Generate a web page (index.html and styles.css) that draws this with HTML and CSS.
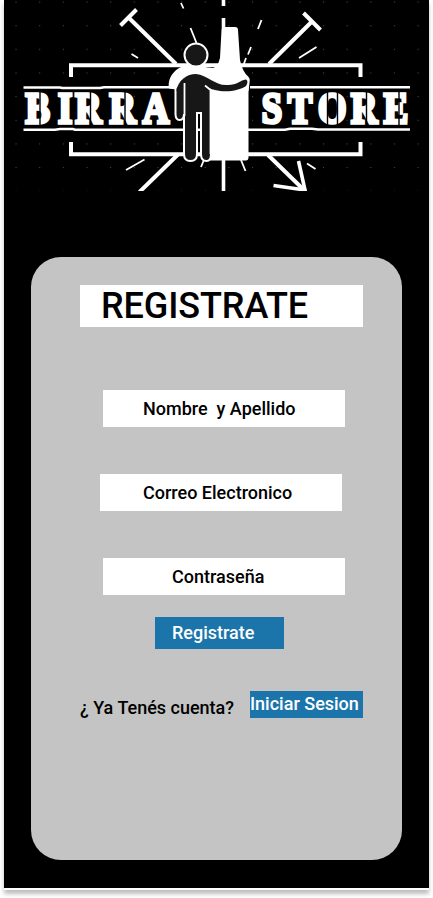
FILE: index.html
```html
<!DOCTYPE html>
<html lang="es">
<head>
<meta charset="utf-8">
<title>Birra Store</title>
<link rel="stylesheet" href="styles.css">
</head>
<body>
<div class="screen">
  <div class="page">
    <header class="hero">
      <svg class="logo" viewBox="4 0 425 191" role="img" aria-label="Birra Store">
        <defs>
          <pattern id="dots" x="15.5" y="1.5" width="23.65" height="23.65" patternUnits="userSpaceOnUse">
            <rect width="1.1" height="1.1" fill="#484848"/>
          </pattern>
        </defs>
        <rect x="4" width="425" height="191" fill="#000"/>
        <rect x="4" width="425" height="191" fill="url(#dots)"/>
        <g fill="none" stroke="#fff" stroke-width="4">
          <path d="M71 77V65.300H360.500V77M71 142V154.300H360.500V142"/>
          <path d="M128.500 17.500L176 64M120.500 25.500L136.500 9.500M311.500 22L269 64M303.500 13L320.500 30M178.500 154L139.500 192M268 155L305 191"/>
          <path d="M298.500 161L305 190L273.500 185.500" stroke-width="3.600"/>
          <path d="M223.500 0V6M223.500 18V30M223.500 158V191" stroke-width="3.600"/>
        </g>
        <g stroke="#fff" stroke-width="1.800">
          <path d="M181 3L183.500 8.500M190.500 28L196.500 43M131.500 54L138 58M126 170L144.500 159.500M203.500 161L201 167M261.500 20L258 29M251 47L248 54.500M246 58L243.500 65M299 58L316.500 47M241 160L245.500 171M307 163.500L315.500 169"/>
        </g>
        <path d="M23.500 87.500H60L62 88H100L104 87.300H410M23.500 129.700H55L60 129H73L75 129.700H285L290 128.700H312L318 129.500H410" fill="none" stroke="#fff" stroke-width="2.600"/>
        <g class="wordmark">
          <text transform="translate(0 123.300) scale(.84 1)" x="30.500 69 89.500 130.500 170">BIRRA</text>
          <text transform="translate(0 123.300) scale(.84 1)" x="311.500 342.500 378.500 418 457">STORE</text>
        </g>
        <path d="M40 91V126.500M90.500 91V126.500M125 91V126.500M327.500 91V126.500M337.500 91V126.500M366.500 91V126.500M399 91V126.500" stroke="#000" stroke-width="1.400"/>
        <path d="M174 84H250V120H174Z" fill="#000"/>
        <path d="M208 158V71Q218 68 220 58L221.500 30Q222 27 225 27H235Q238 27 238 30L240 60Q242 71 248.500 77V158Q248 160.500 246 160.500H208Z" fill="#fff"/>
        <path d="M169 88.500C167 77 176 67 187 65C200 62 211 73 221 65L240 64Q242 72 246 76Q251 77 249.500 83L248.500 91H211L185 84Q179 81 176 89.500Z" fill="#fff"/>
        <g fill="#171717" stroke="#fff" stroke-width="2">
          <path d="M175.500 88V114Q175.500 120 179.500 120Q184 120 184 114V154Q184 161 190.500 161Q197 161 197 154V113H201V154Q201 161 206.500 161Q211 161 211 154V80H182Z"/>
          <circle cx="196" cy="55" r="11.500"/>
        </g>
        <path d="M176.500 91C178 80 187 74 196 74C208 75 215 86 228 85C237 85 241 80 245.500 79.500C248 80 248 83 246 86C240 90 231 92 220 91C214 90 211 89 207 87L200 93H185Z" fill="#171717"/>
        <path d="M184.500 83V116M205 85.500L210.500 90V154" fill="none" stroke="#fff" stroke-width="1.800"/>
      </svg>
    </header>

    <main class="card">
      <h1 class="title">REGISTRATE</h1>
      <form class="form">
        <div class="field">Nombre&nbsp; y Apellido</div>
        <div class="field field-email">Correo Electronico</div>
        <div class="field field-password">Contraseña</div>
        <button class="submit" type="button">Registrate</button>
      </form>
      <div class="login">
        <span class="question">¿ Ya Tenés cuenta?</span>
        <a class="login-link">Iniciar Sesion</a>
      </div>
    </main>
  </div>
</div>
</body>
</html>
```
FILE: styles.css
```css
* {
  box-sizing: border-box;
}

body {
  margin: 0;
  height: 898px;
  overflow: hidden;
  background: #fff;
  color: #000;
  font: 500 18px/21px Roboto, sans-serif;
}

.screen {
  width: 425px;
  height: 890px;
  margin: 0 4px;
  background: #fff;
  box-shadow: 0 4px 4px rgba(0, 0, 0, 0.25);
}

.page {
  height: 888px;
  background: #000;
}

.hero {
  height: 257px;
}

.logo {
  display: block;
  width: 425px;
  height: 191px;
}

.wordmark {
  fill: #fff;
  stroke: #fff;
  stroke-width: 3.6px;
  font: bold 43.5px "Liberation Serif", serif;
}

.card {
  width: 371px;
  height: 603px;
  margin-left: 27px;
  padding: 28px 39px 0 49px;
  border-radius: 30px;
  background: #c4c4c4;
}

.title {
  width: 283px;
  height: 42px;
  margin: 0;
  padding-left: 21px;
  background: #fff;
  font-size: 36px;
  font-weight: 500;
  line-height: 42px;
  letter-spacing: -0.1px;
}

.form {
  display: flex;
  flex-direction: column;
  align-items: flex-start;
  gap: 47px;
  padding: 63px 0 0 20px;
}

.field {
  width: 242px;
  height: 37px;
  margin-left: 3px;
  padding: 8px 0 0 40px;
  background: #fff;
}

.field-email {
  margin-left: 0;
  padding-left: 43px;
}

.field-password {
  padding-left: 69px;
}

.submit {
  width: 129px;
  height: 32px;
  margin: -25px 0 0 55px;
  padding: 0 0 1px 17px;
  border: 0;
  background: #1c75aa;
  color: #fff;
  font: inherit;
  text-align: left;
}

.login {
  display: flex;
  justify-content: space-between;
  width: 283px;
  margin-top: 42px;
  white-space: nowrap;
}

.question {
  padding-top: 6px;
}

.login-link {
  width: 113px;
  height: 27px;
  padding-top: 2px;
  background: #1c75aa;
  color: #fff;
}
```
